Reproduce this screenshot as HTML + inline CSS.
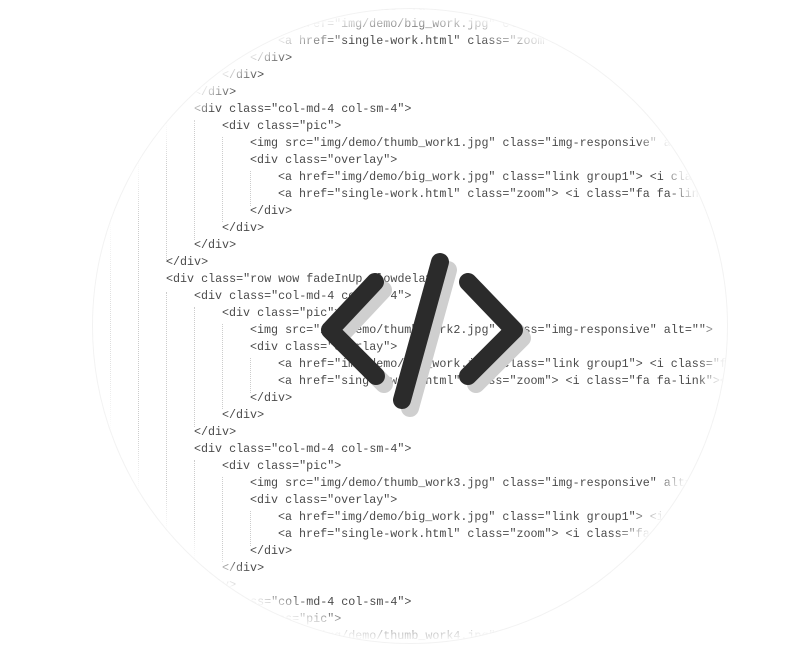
<!DOCTYPE html>
<html><head><meta charset="utf-8"><style>
html,body{margin:0;padding:0;background:#fff;width:800px;height:648px;overflow:hidden;position:relative}
.code{position:absolute;left:0;top:2px;width:800px;height:648px;font-family:"Liberation Mono",monospace;font-size:11.7px;color:#4a4a4a}
.l{position:absolute;white-space:pre;line-height:14px}
.g{position:absolute;width:0;border-left:1px dotted #ccc}
.fade{position:absolute;left:0;top:0;width:800px;height:648px;background:radial-gradient(circle at 410px 326px,rgba(255,255,255,0) 292px,rgba(255,255,255,.7) 308px,#fff 318px,#fff 2000px)}
.ring{position:absolute;left:92px;top:8px;width:636px;height:636px;border-radius:50%;border:1px solid rgba(0,0,0,.05);box-sizing:border-box}
svg{position:absolute;left:0;top:0}
</style></head><body>
<div class="code">
<div class="g" style="left:110px;top:0;height:648px"></div>
<div class="g" style="left:138px;top:0;height:648px"></div>
<div class="g" style="left:166px;top:0;height:260px"></div>
<div class="g" style="left:166px;top:290px;height:358px"></div>
<div class="g" style="left:194px;top:0;height:88px"></div>
<div class="g" style="left:194px;top:118px;height:120px"></div>
<div class="g" style="left:194px;top:305px;height:120px"></div>
<div class="g" style="left:194px;top:458px;height:120px"></div>
<div class="g" style="left:222px;top:0;height:70px"></div>
<div class="g" style="left:222px;top:135px;height:85px"></div>
<div class="g" style="left:222px;top:322px;height:85px"></div>
<div class="g" style="left:222px;top:475px;height:85px"></div>
<div class="g" style="left:250px;top:0;height:52px"></div>
<div class="g" style="left:250px;top:169px;height:35px"></div>
<div class="g" style="left:250px;top:356px;height:35px"></div>
<div class="g" style="left:250px;top:509px;height:35px"></div>
<div class="l" style="left:278px;top:-2px">    ck"&gt; &lt;i class="fa fa-search"&gt;&lt;/i&gt;&lt;/a&gt;</div>
<div class="l" style="left:278px;top:15px">&lt;a href="img/demo/big_work.jpg" class="link group1"&gt;</div>
<div class="l" style="left:278px;top:32px">&lt;a href="single-work.html" class="zoom"&gt;</div>
<div class="l" style="left:250px;top:49px">&lt;/div&gt;</div>
<div class="l" style="left:222px;top:66px">&lt;/div&gt;</div>
<div class="l" style="left:194px;top:83px">&lt;/div&gt;</div>
<div class="l" style="left:194px;top:100px">&lt;div class="col-md-4 col-sm-4"&gt;</div>
<div class="l" style="left:222px;top:117px">&lt;div class="pic"&gt;</div>
<div class="l" style="left:250px;top:134px">&lt;img src="img/demo/thumb_work1.jpg" class="img-responsive" alt=""&gt;</div>
<div class="l" style="left:250px;top:151px">&lt;div class="overlay"&gt;</div>
<div class="l" style="left:278px;top:168px">&lt;a href="img/demo/big_work.jpg" class="link group1"&gt; &lt;i class="fa</div>
<div class="l" style="left:278px;top:185px">&lt;a href="single-work.html" class="zoom"&gt; &lt;i class="fa fa-link"&gt;</div>
<div class="l" style="left:250px;top:202px">&lt;/div&gt;</div>
<div class="l" style="left:222px;top:219px">&lt;/div&gt;</div>
<div class="l" style="left:194px;top:236px">&lt;/div&gt;</div>
<div class="l" style="left:166px;top:253px">&lt;/div&gt;</div>
<div class="l" style="left:166px;top:270px">&lt;div class="row wow fadeInUp slowdelay"&gt;</div>
<div class="l" style="left:194px;top:287px">&lt;div class="col-md-4 col-sm-4"&gt;</div>
<div class="l" style="left:222px;top:304px">&lt;div class="pic"&gt;</div>
<div class="l" style="left:250px;top:321px">&lt;img src="img/demo/thumb_work2.jpg" class="img-responsive" alt=""&gt;</div>
<div class="l" style="left:250px;top:338px">&lt;div class="overlay"&gt;</div>
<div class="l" style="left:278px;top:355px">&lt;a href="img/demo/big_work.jpg" class="link group1"&gt; &lt;i class="fa</div>
<div class="l" style="left:278px;top:372px">&lt;a href="single-work.html" class="zoom"&gt; &lt;i class="fa fa-link"&gt;&lt;</div>
<div class="l" style="left:250px;top:389px">&lt;/div&gt;</div>
<div class="l" style="left:222px;top:406px">&lt;/div&gt;</div>
<div class="l" style="left:194px;top:423px">&lt;/div&gt;</div>
<div class="l" style="left:194px;top:440px">&lt;div class="col-md-4 col-sm-4"&gt;</div>
<div class="l" style="left:222px;top:457px">&lt;div class="pic"&gt;</div>
<div class="l" style="left:250px;top:474px">&lt;img src="img/demo/thumb_work3.jpg" class="img-responsive" alt=""&gt;</div>
<div class="l" style="left:250px;top:491px">&lt;div class="overlay"&gt;</div>
<div class="l" style="left:278px;top:508px">&lt;a href="img/demo/big_work.jpg" class="link group1"&gt; &lt;i class</div>
<div class="l" style="left:278px;top:525px">&lt;a href="single-work.html" class="zoom"&gt; &lt;i class="fa</div>
<div class="l" style="left:250px;top:542px">&lt;/div&gt;</div>
<div class="l" style="left:222px;top:559px">&lt;/div&gt;</div>
<div class="l" style="left:194px;top:576px">&lt;/div&gt;</div>
<div class="l" style="left:194px;top:593px">&lt;div class="col-md-4 col-sm-4"&gt;</div>
<div class="l" style="left:222px;top:610px">&lt;div class="pic"&gt;</div>
<div class="l" style="left:250px;top:627px">&lt;img src="img/demo/thumb_work4.jpg" class="img-responsive"&gt;</div>
</div>
<div class="fade"></div>
<div class="ring"></div>
<svg width="800" height="648" viewBox="0 0 800 648">
<g fill="none" stroke="#cfcfcf" stroke-width="18" stroke-linecap="round" stroke-linejoin="round">
<polyline points="383,290 338,338 384,384"/>
<line x1="448" y1="270" x2="410" y2="408"/>
<polyline points="476,290 522,338 476,384"/>
</g>
<g fill="none" stroke="#2b2b2b" stroke-width="18" stroke-linecap="round" stroke-linejoin="round">
<polyline points="375,282 330,330 376,376"/>
<line x1="440" y1="262" x2="402" y2="400"/>
<polyline points="468,282 514,330 468,376"/>
</g>
</svg>
</body></html>
